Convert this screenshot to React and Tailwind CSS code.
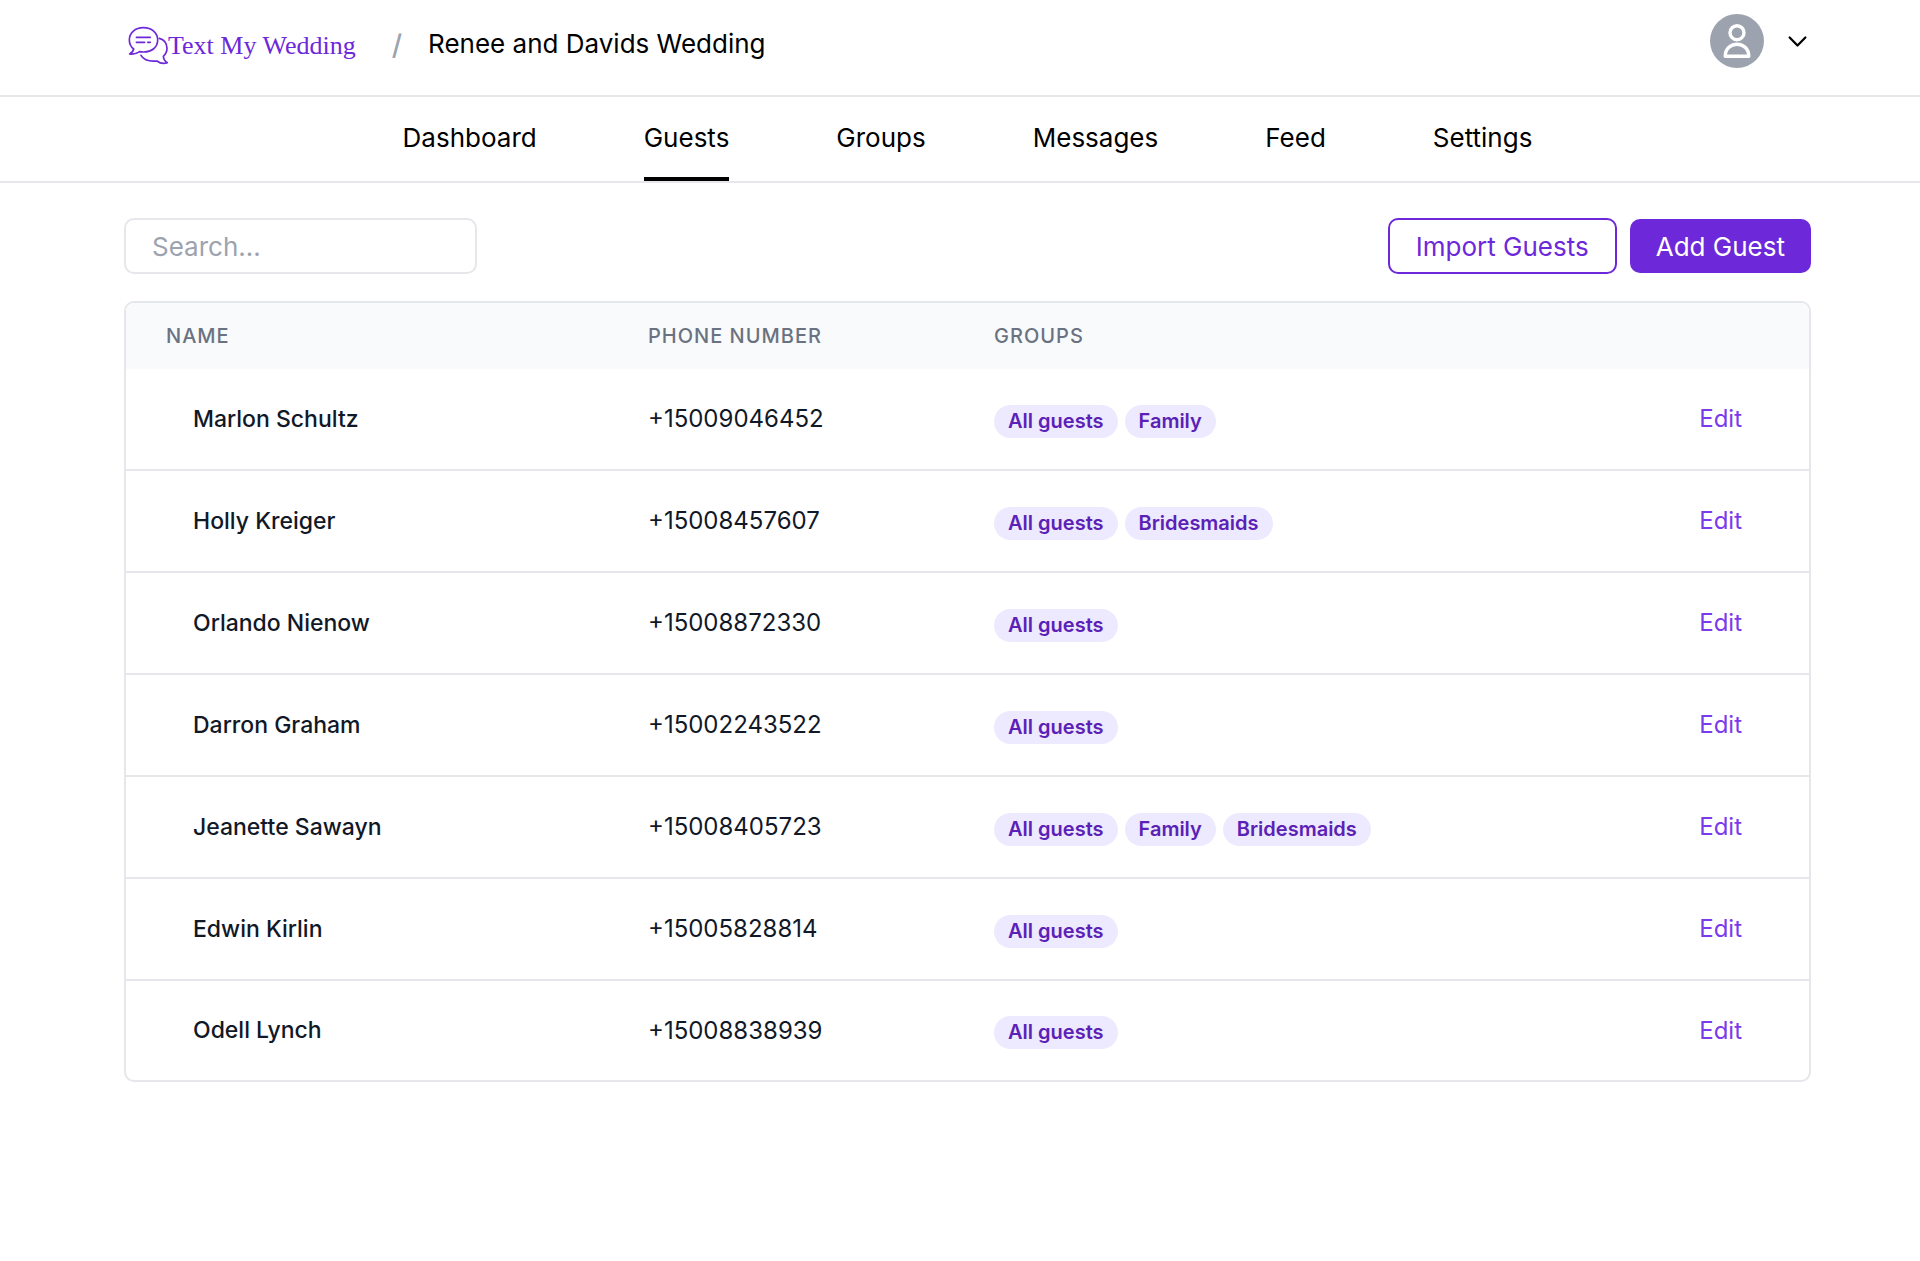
import React, { useState } from 'react';

const navItems = ['Dashboard', 'Guests', 'Groups', 'Messages', 'Feed', 'Settings'];

const guests = [
  { name: 'Marlon Schultz', phone: '+15009046452', groups: ['All guests', 'Family'] },
  { name: 'Holly Kreiger', phone: '+15008457607', groups: ['All guests', 'Bridesmaids'] },
  { name: 'Orlando Nienow', phone: '+15008872330', groups: ['All guests'] },
  { name: 'Darron Graham', phone: '+15002243522', groups: ['All guests'] },
  { name: 'Jeanette Sawayn', phone: '+15008405723', groups: ['All guests', 'Family', 'Bridesmaids'] },
  { name: 'Edwin Kirlin', phone: '+15005828814', groups: ['All guests'] },
  { name: 'Odell Lynch', phone: '+15008838939', groups: ['All guests'] },
];

const Logo = () => (
  <a href="#" className="flex items-center text-[#6d28d9]">
    <svg
      viewBox="54 78 120 117"
      className="w-10 h-[39px] shrink-0"
      fill="none"
      stroke="currentColor"
      strokeWidth="5"
      strokeLinecap="round"
      strokeLinejoin="round"
      aria-hidden="true"
    >
      <path d="M59 162 C66 158 70 153 71 147 C62 140 58 130 58 120 C58 98 76 83 100 83 C125 83 143 98 143 120 C143 142 125 156 101 156 C97 156 93 156 89 155 C80 161 70 164 59 162 Z" />
      <path d="M79 112 H121 M79 127 H104 M113 127 H121" />
      <path d="M148 115 C162 119 171 131 171 145 C171 155 167 163 160 169 C161 178 165 184 172 188 C161 192 150 190 141 183 C121 185 101 180 93 166" />
    </svg>
    <span className="font-['Liberation_Serif',serif] text-[26px] leading-8 whitespace-nowrap">Text My Wedding</span>
  </a>
);

const Header = () => (
  <header className="border-b-2 border-gray-200">
    <div className="flex items-start justify-between pl-[128px] pr-[109px] pt-3.5 pb-[27px]">
      <div className="flex items-center pt-3">
        <Logo />
        <span className="ml-9 pb-0.5 text-[28px] leading-8 font-medium text-[#9ca3af]">/</span>
        <h1 className="ml-[26px] pb-1 text-[26px] leading-8 text-black">Renee and Davids Wedding</h1>
      </div>
      <button type="button" aria-label="Account menu" className="flex items-center gap-5">
        <svg viewBox="0 0 54 54" className="w-[54px] h-[54px]" fill="none" stroke="white" strokeWidth="3.4" strokeLinejoin="round">
          <circle cx="27" cy="27" r="27" fill="#9ca3af" stroke="none" />
          <circle cx="27" cy="18.7" r="7" />
          <path d="M15.2 42.3 C15.2 35 20.4 30.2 27 30.2 C33.6 30.2 38.8 35 38.8 42.3 Z" />
        </svg>
        <svg viewBox="0 0 24 24" className="w-[27px] h-[27px]" fill="none" stroke="black" strokeWidth="2" strokeLinecap="round" strokeLinejoin="round">
          <path d="M19 8.5l-7 7-7-7" />
        </svg>
      </button>
    </div>
  </header>
);

const Nav = () => (
  <nav className="border-b-2 border-gray-200 pl-[124px] pr-[109px]">
    <ul className="flex justify-center gap-[107px]">
      {navItems.map((item) => (
        <li key={item}>
          <a
            href="#"
            className={`block border-b-4 pt-[25px] pb-[23px] text-[26px] leading-8 text-black ${
              item === 'Guests' ? 'border-black' : 'border-transparent'
            }`}
          >
            {item}
          </a>
        </li>
      ))}
    </ul>
  </nav>
);

const GuestTable = ({ rows }) => (
  <div className="mt-[27px] overflow-hidden rounded-[10px] border-2 border-gray-200">
    <table className="w-full table-fixed text-left">
      <thead className="bg-gray-50 text-xl leading-[26px] tracking-wider text-gray-500 uppercase">
        <tr>
          <th scope="col" className="w-[482px] py-5 pl-10 font-medium">Name</th>
          <th scope="col" className="w-[346px] py-5 pl-10 font-medium">Phone number</th>
          <th scope="col" className="py-5 pl-10 font-medium">Groups</th>
          <th scope="col" aria-label="Actions" className="w-[240px] py-5" />
        </tr>
      </thead>
      <tbody className="divide-y-2 divide-gray-200 text-2xl text-[#111827]">
        {rows.map((guest) => (
          <tr key={guest.phone} className="h-[102px] first:h-[101px] last:h-[100px]">
            <td className="pl-[67px] text-[23px] font-medium">{guest.name}</td>
            <td className="pl-10">{guest.phone}</td>
            <td className="pl-10">
              <div className="flex gap-[7px] pt-1">
                {guest.groups.map((group) => (
                  <span
                    key={group}
                    className="rounded-full bg-[#ede9fe] px-3.5 text-xl leading-[33px] font-semibold text-[#5b21b6]"
                  >
                    {group}
                  </span>
                ))}
              </div>
            </td>
            <td className="pr-[67px] text-right">
              <a href="#" className="text-[#7c3aed]">Edit</a>
            </td>
          </tr>
        ))}
      </tbody>
    </table>
  </div>
);

const App = () => {
  const [search, setSearch] = useState('');
  const rows = guests.filter((guest) => guest.name.toLowerCase().includes(search.toLowerCase()));

  return (
    <div className="min-h-screen bg-white font-['Inter',sans-serif]">
      <Header />
      <Nav />
      <main className="pt-[35px] pb-16 pl-[124px] pr-[109px]">
        <div className="flex items-center justify-between">
          <input
            type="text"
            aria-label="Search guests"
            placeholder="Search..."
            value={search}
            onChange={(e) => setSearch(e.target.value)}
            className="h-14 w-[353px] rounded-[10px] border-2 border-gray-200 px-[26px] text-[26px] placeholder:text-[#9ca3af]"
          />
          <div className="flex items-center gap-[13px]">
            <button type="button" className="h-14 rounded-[10px] border-2 border-[#6d28d9] px-[26px] text-[26px] text-[#6d28d9]">
              Import Guests
            </button>
            <button type="button" className="h-[54px] rounded-[10px] bg-[#6d28d9] px-[26px] text-[26px] text-white">
              Add Guest
            </button>
          </div>
        </div>
        <GuestTable rows={rows} />
      </main>
    </div>
  );
};

export default App;
